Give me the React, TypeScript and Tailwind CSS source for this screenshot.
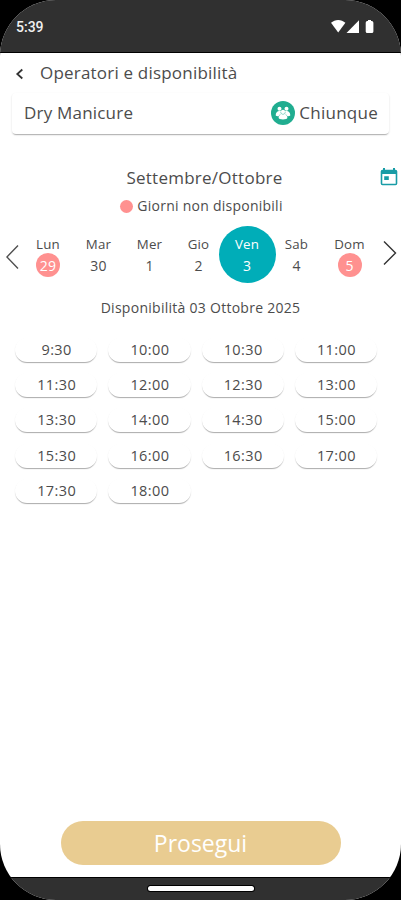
import React, { useState } from "react";
import clsx from "clsx";

const days = [
  { name: "Lun", day: 29, width: "w-6", disabled: true },
  { name: "Mar", day: 30, width: "w-[26px]" },
  { name: "Mer", day: 1, width: "w-[25px]" },
  { name: "Gio", day: 2, width: "w-[22px]" },
  { name: "Ven", day: 3, width: "w-6" },
  { name: "Sab", day: 4, width: "w-6" },
  { name: "Dom", day: 5, width: "w-[31px]", disabled: true },
];

const slots = [
  "9:30", "10:00", "10:30", "11:00",
  "11:30", "12:00", "12:30", "13:00",
  "13:30", "14:00", "14:30", "15:00",
  "15:30", "16:00", "16:30", "17:00",
  "17:30", "18:00",
];

const StatusBar: React.FC = () => (
  <div className="flex h-[53px] shrink-0 justify-between border-b border-black bg-[#303030] pl-4 pr-[26px] pt-[19px] text-white">
    <span className="font-['Roboto',sans-serif] text-[14px] font-medium leading-4 text-[#f0f0f0]">
      5:39
    </span>
    <svg width="45" height="16" viewBox="0 0 45 16" fill="currentColor">
      <path d="M1 3.8C5-.1 11.4-.1 15.4 3.8L8.2 13.4Z" />
      <path d="M29 1.2V14H16.5Z" />
      <path d="M38 1.1h3v1h.8a1.6 1.6 0 0 1 1.6 1.6v8.7a1.6 1.6 0 0 1-1.6 1.6h-4.5a1.6 1.6 0 0 1-1.6-1.6V3.7a1.6 1.6 0 0 1 1.6-1.6h.7Z" />
    </svg>
  </div>
);

const PeopleIcon: React.FC = () => (
  <span className="flex size-6 items-center justify-center rounded-full bg-[#20ad90] text-white">
    <svg width="16" height="14" viewBox="0 0 16 14" fill="currentColor">
      <circle cx="4.5" cy="2.8" r="2" />
      <circle cx="11.5" cy="2.8" r="2" />
      <path d="M.7 9.2C.7 6.7 2.2 5 4.4 5h7.2c2.2 0 3.7 1.7 3.7 4.2 0 .7-1.7 1.1-3 1.1H3.7c-1.3 0-3-.4-3-1.1Z" />
      <path d="M3.6 11.8c0-2.4 1.8-3.9 4.4-3.9s4.4 1.5 4.4 3.9c0 1-2 1.6-4.4 1.6s-4.4-.6-4.4-1.6Z" />
      <circle cx="8" cy="6" r="2.2" />
      <path
        d="M5.7 5.7c0 1.6 1 2.6 2.3 2.6s2.3-1 2.3-2.6M5.5 8.3 3.7 10M10.5 8.3l1.8 1.7"
        fill="none"
        stroke="#20ad90"
        strokeWidth=".5"
      />
    </svg>
  </span>
);

const CalendarIcon: React.FC = () => (
  <svg width="18" height="18" viewBox="0 0 18 18" fill="#189ca6">
    <path
      fillRule="evenodd"
      d="M3 0h2v1.7h8V0h2v1.7h.5A1.8 1.8 0 0 1 17.3 3.5v12a1.8 1.8 0 0 1-1.8 1.8h-13A1.8 1.8 0 0 1 .7 15.5v-12A1.8 1.8 0 0 1 2.5 1.7H3ZM2.3 5.9v9.8h13.4V5.9ZM4.2 8.2h4.6v3.7H4.2Z"
    />
  </svg>
);

export default function App() {
  const [selectedDay, setSelectedDay] = useState(3);

  return (
    <div className="h-[900px] w-full overflow-hidden bg-black font-['Open_Sans',sans-serif] text-[#4c4c4c]">
      <div className="flex h-full flex-col overflow-hidden rounded-[56px] bg-white">
        <StatusBar />

        <main className="flex flex-1 flex-col">
          <header className="flex h-10 items-center pl-[15px]">
            <button aria-label="Indietro" className="pt-0.5">
              <svg width="10" height="12" viewBox="0 0 10 12" fill="none" stroke="#333" strokeWidth="1.8">
                <path d="M7.3 1.5 2.3 6l5 4.5" />
              </svg>
            </button>
            <h1 className="ml-[15px] text-[17px] tracking-[0.2px]">
              Operatori e disponibilità
            </h1>
          </header>

          <div className="mx-3 flex h-[41px] items-center justify-between rounded-[4px] pb-0.5 pl-3 pr-[11px] shadow-[0_2px_1px_-1px_rgba(0,0,0,0.2),0_1px_2px_rgba(0,0,0,0.16)]">
            <span className="text-[17px] tracking-[0.2px]">Dry Manicure</span>
            <span className="flex items-center gap-1 text-[17px] tracking-[0.25px]">
              <PeopleIcon />
              Chiunque
            </span>
          </div>

          {/* Calendar */}
          <div className="mt-8 grid grid-cols-[1fr_auto_1fr] items-center pl-[11px] pr-[3px]">
            <span />
            <h2 className="text-[17px] leading-6 tracking-[0.25px]">Settembre/Ottobre</h2>
            <button aria-label="Calendario" className="justify-self-end pb-0.5">
              <CalendarIcon />
            </button>
          </div>
          <div className="mt-1.5 flex items-center justify-center gap-1 pl-0.5 text-[14px] leading-5 tracking-[0.25px]">
            <span className="size-[13px] rounded-full bg-[#ff9190]" />
            Giorni non disponibili
          </div>

          <div className="mt-2.5 flex h-[57px] items-center justify-between pl-1.5 pr-1">
            <button aria-label="Settimana precedente" className="pt-1">
              <svg width="13" height="26" viewBox="0 0 13 26" fill="none" stroke="#505050" strokeWidth="1.4">
                <path d="M12 1.5.9 13 12 24.5" />
              </svg>
            </button>
            <div className="flex flex-1 justify-between pl-[17px] pr-[18px]">
              {days.map((d) => (
                <button
                  key={d.day}
                  disabled={d.disabled}
                  onClick={() => setSelectedDay(d.day)}
                  className={clsx(
                    "flex h-[57px] shrink-0 flex-col items-center pt-[9px] text-[13.3px]",
                    d.day === selectedDay
                      ? "-mx-[16.5px] w-[57px] rounded-full bg-[#00adb8] font-medium text-white"
                      : d.width,
                  )}
                >
                  <span className="leading-[18px] tracking-[0.2px]">{d.name}</span>
                  <span
                    className={clsx(
                      "flex size-6 items-center justify-center rounded-full text-[14px] tracking-[0.2px]",
                      d.disabled && "bg-[#ff9190] text-white",
                    )}
                  >
                    {d.day}
                  </span>
                </button>
              ))}
            </div>
            <button aria-label="Settimana successiva" className="pb-1">
              <svg width="14" height="26" viewBox="0 0 14 26" fill="none" stroke="#333" strokeWidth="1.4">
                <path d="M1 1.5 12.5 13 1 24.5" />
              </svg>
            </button>
          </div>

          <p className="mt-[15px] text-center text-[14px] leading-5 tracking-[0.27px]">
            Disponibilità 03 Ottobre 2025
          </p>

          {/* Time slots */}
          <div className="mt-5 grid grid-cols-4 gap-x-[11px] gap-y-[11.2px] pl-[15px] pr-6">
            {slots.map((slot) => (
              <button
                key={slot}
                className="h-6 rounded-full pl-px text-[14.5px] leading-6 tracking-[0.4px] shadow-[0_2px_1px_-1px_rgba(0,0,0,0.2),0_1px_1px_rgba(0,0,0,0.16)]"
              >
                {slot}
              </button>
            ))}
          </div>

          <button className="mx-auto mb-3 mt-auto h-11 w-[280px] rounded-full bg-[#e9cc91] text-[23px] text-white">
            Prosegui
          </button>
        </main>

        <nav className="flex h-[23px] shrink-0 justify-center border-t border-black bg-[#303030] pt-2">
          <span className="h-[5px] w-[106px] rounded-full bg-white ring-1 ring-black" />
        </nav>
      </div>
    </div>
  );
}
